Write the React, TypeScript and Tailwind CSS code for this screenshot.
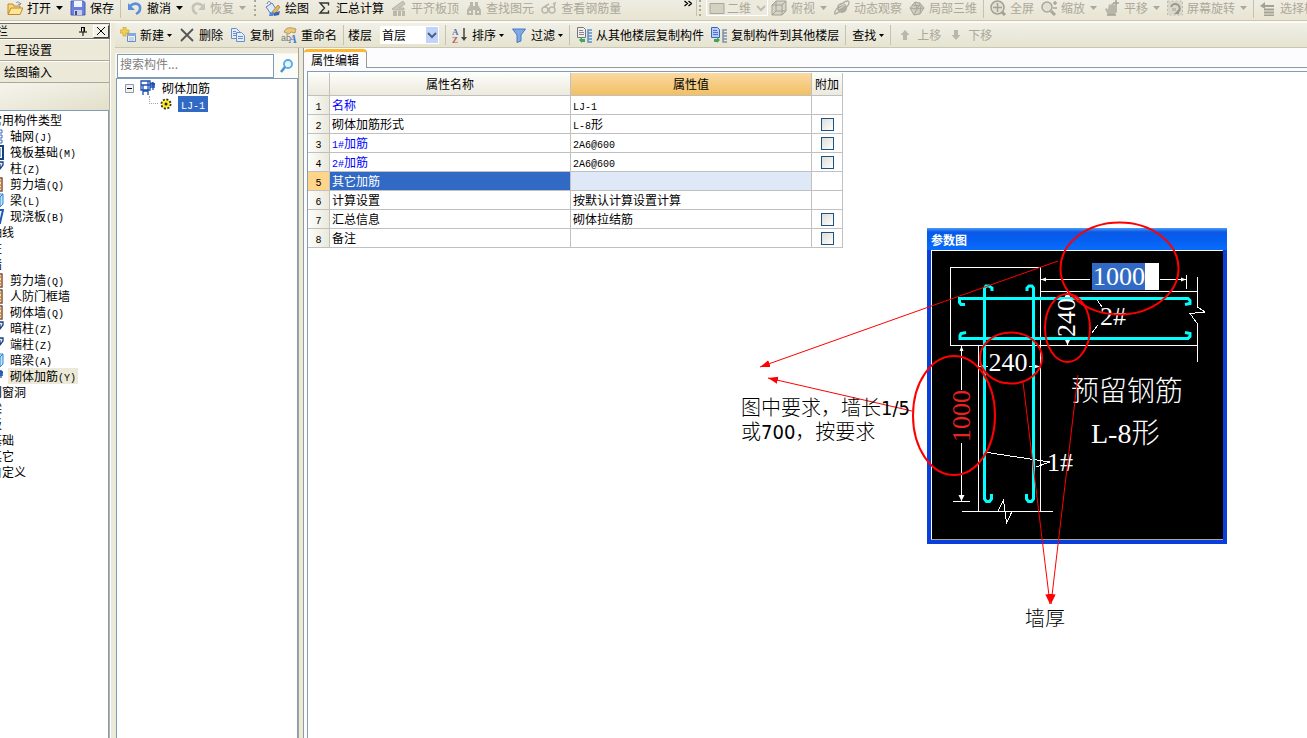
import React from 'react';

const MONO = /([\x21-\x7e]+)/;

// Latin runs are set in a half-width face, six pixels per character
const Mixed: React.FC<{ text: string }> = ({ text }) => (
  <>
    {text.split(MONO).map((part, i) =>
      MONO.test(part) ? (
        <span key={i} className="font-['Liberation_Mono',monospace] text-[10px] leading-none">
          {part}
        </span>
      ) : (
        part
      )
    )}
  </>
);

const icons: Record<string, React.ReactNode> = {
  open: (
    <>
      <path d="M1 14V4h5l1 2h6v3" fill="#f7d774" stroke="#c08a2a" />
      <path d="M1 14.500 4 8h12l-3 6.500z" fill="#fde69a" stroke="#c08a2a" />
      <path d="M9 3c2-2 4-1 4 1m-2 0 2 1 1-2" fill="none" stroke="#6f8fb5" />
    </>
  ),
  save: (
    <>
      <path d="M1 1h12.500L15 2.500V15H1z" fill="#6a80dc" stroke="#4a5cae" />
      <path d="M4 1h8v6H4z" fill="#eef3ff" />
      <path d="M4 10h8v5H4z" fill="#c9cfe0" />
      <path d="M5 11h2v4H5z" fill="#3d4c94" />
    </>
  ),
  undo: (
    <>
      <path d="M3 6c6-5 11-1 10 3 0 2-2 4-4 5" fill="none" stroke="#5b8fdc" strokeWidth="2.500" />
      <path d="M1 3v7h7z" fill="#5b8fdc" />
    </>
  ),
  redo: (
    <>
      <path d="M13 6C7 1 2 5 3 9c0 2 2 4 4 5" fill="none" stroke="#c5c3b8" strokeWidth="2.500" />
      <path d="M15 3v7H8z" fill="#c5c3b8" />
    </>
  ),
  draw: (
    <>
      <path d="M2 4c1-4 4-3 4 1" fill="none" stroke="#5c7fb4" />
      <path d="m1 7 6-4 4 6-5 5z" fill="#dce9fa" stroke="#5c7fb4" />
      <path d="m7 12 6-7 2 2-5 7z" fill="#e4b75b" stroke="#a87a30" strokeWidth=".7" />
      <path d="m5 12 5 1-2 3H4z" fill="#4e86d8" />
      <path d="m9 13 6-2-1 4-5 1z" fill="#3a62b3" />
    </>
  ),
  sigma: <path d="M12.500 5.500V3H4l4.500 5L4 13h8.500v-2.500" fill="none" stroke="#333" strokeWidth="1.400" />,
  slab: (
    <>
      <path d="M1 9 12 1l2 3-6 4h5v2H3z" fill="#c9c7ba" stroke="#b5b3a6" />
      <path d="M2 11h4v5H2zM7 11h3v5H7zM11 11h3v5h-3z" fill="#bbb8aa" />
    </>
  ),
  binoculars: (
    <path d="M4 2h3v4h2V2h3v3l3 5v5H9v-5H7v5H1v-5l3-5zM3 11v2h2v-2zm8 0v2h2v-2z" fill="#b9b7aa" />
  ),
  glasses: (
    <g fill="none" stroke="#b9b7aa" strokeWidth="1.500">
      <circle cx="4" cy="10" r="3" />
      <circle cx="11" cy="10" r="3" />
      <path d="m7 9 1 0M3 7l5-3M13 8l1-5-2 1" />
    </g>
  ),
  flat: <path d="M1 3.500h14v10H1z" fill="#d3d1c2" stroke="#a9a798" />,
  cube: (
    <g stroke="#a3a196">
      <path d="m1 5 4-4h10v10l-4 4H1z" fill="#d6d4c6" />
      <path d="M1 5h10v10M11 5l4-4M5 1v10h10M5 11l-4 4" fill="none" />
    </g>
  ),
  orbit: (
    <>
      <circle cx="8" cy="8" r="5" fill="#aeaca0" />
      <path d="M1 14C-1 11 9 1 14 1c3 1-1 7-5 9s-7 4-8 4z" fill="none" stroke="#aeaca0" strokeWidth="1.300" />
      <path d="m5 6 5-2M5 9l6-4" stroke="#dedccf" />
    </>
  ),
  local: (
    <g stroke="#a9a79b" fill="#cfcdbf">
      <path d="m1 8 5-6 5 1 4 5-4 6-6 1z" />
      <path d="m6 2 2 7-3 6M8 9l7-1M3 5l9 1-1 8M1 8l7 1 3-6" fill="none" />
    </g>
  ),
  full: (
    <g fill="none" stroke="#a3a196">
      <circle cx="7.500" cy="7.500" r="6.500" fill="#e2e0d3" strokeWidth="1.500" />
      <path d="M7.500 3v9M3 7.500h9" strokeWidth="1.500" />
      <path d="m12 12 3 3" strokeWidth="3" />
    </g>
  ),
  zoom: (
    <g fill="none" stroke="#a9a79b">
      <circle cx="6" cy="7" r="5" fill="#e2e0d3" strokeWidth="1.500" />
      <path d="m10 11 4 4" strokeWidth="3" />
      <path d="M12 3h4M14 1v4M12 8h4" strokeWidth="1.500" />
    </g>
  ),
  pan: (
    <>
      <path d="m1 9 2-1 1 2 1-6 2 1 1-2 2 1 1 2h2v6l-3 3H4z" fill="#b8b6aa" />
      <path d="M9 3h6M12 0v6M3 15h9" stroke="#a3a196" strokeWidth="1.500" />
    </>
  ),
  rotate: (
    <>
      <path d="M.500 1h15v14H.500z" fill="#dad8ca" stroke="#bebcaf" strokeDasharray="2 2" />
      <path d="M4 7a4.500 4.500 0 1 1 7 5" fill="none" stroke="#999789" strokeWidth="2" />
      <path d="M12 9v5H7z" fill="#999789" />
      <path d="M5 8h4v3H5z" fill="#bebcaf" />
    </>
  ),
  pick: (
    <>
      <path d="m0 6 5-4v3h9v2H5v2z" fill="#a3a196" />
      <path d="M4 9.500h10M4 12.500h10M4 15.500h10" stroke="#a3a196" strokeWidth="2" />
    </>
  ),
  create: (
    <>
      <path d="M7.500 6.500h8v8h-8z" fill="#eaf2fc" stroke="#6b8cbd" />
      <path d="M7 6h9v3H7z" fill="#86a9d8" />
      <path d="M9 11h5M9 13h5" stroke="#9db6d8" />
      <path d="M3 0h3v3h3v3H6v3H3V6H0V3h3z" fill="#f3cf4e" stroke="#c49a28" strokeWidth=".6" />
    </>
  ),
  remove: <path d="m2 2 12 12M14 2 2 14" stroke="#555" strokeWidth="1.800" />,
  copy: (
    <g fill="#e4eefb" stroke="#6a8fc8">
      <path d="M1.500 1.500h5l3 3v7h-8z" />
      <path d="M6.500 5.500h5l3 3v6h-8z" />
      <path d="M8 9.500h5M8 11.500h5M3 4.500h3M3 6.500h3M3 8.500h3" />
    </g>
  ),
  rename: (
    <>
      <path d="M3 5C5 0 9 0 15 2l-1 4-4-1-2 2z" fill="#eec77d" stroke="#a8813e" strokeWidth=".7" />
      <text x="0" y="14" fontSize="9" fontFamily="Liberation Sans" fill="#777">ab</text>
      <text x="8" y="16" fontSize="12" fontWeight="700" fontStyle="italic" fontFamily="Liberation Serif" fill="#4c78cc">A</text>
    </>
  ),
  sort: (
    <>
      <text x="0" y="7.500" fontSize="9" fontWeight="700" fontFamily="Liberation Serif" fill="#5673b5">A</text>
      <text x="0" y="15.500" fontSize="9" fontWeight="700" fontFamily="Liberation Serif" fill="#b45b6c">Z</text>
      <path d="M12 1v10" stroke="#444" strokeWidth="1.500" />
      <path d="M9 10h6l-3 4z" fill="#444" />
    </>
  ),
  filter: <path d="M1.500 2h13L10 8v6l-4 1.500V8z" fill="#7fa8e6" stroke="#4a78c4" />,
  copyFrom: (
    <>
      <path d="M1.500.500h6l2 2v8h-8z" fill="#eee" stroke="#777" />
      <path d="M3 3.500h4M3 5.500h5M3 7.500h5" stroke="#888" />
      <path d="m3 13 3-3v2h3v3H6v1z" fill="#3fa65a" />
      <path d="M16 3h-4v12h4M12 6h4M12 9h4M12 12h4" fill="none" stroke="#5b8fd0" strokeWidth="1.500" />
    </>
  ),
  copyTo: (
    <>
      <path d="M.500.500h6l2 2v8h-8z" fill="#b7cdf5" stroke="#4163b8" />
      <path d="M2 3.500h4M2 5.500h5M2 7.500h5" stroke="#4f74c6" />
      <path d="m9 13-3-3v2H3v3h3v1z" fill="#3fa65a" />
      <path d="M16 3h-4v12h4M12 6h4M12 9h4M12 12h4" fill="none" stroke="#7d8fa8" strokeWidth="1.500" />
    </>
  ),
  up: <path d="M8 3 3.500 8H6v5h4V8h2.500z" fill="#b9b7ab" />,
  down: <path d="M8 13 3.500 8H6V3h4v5h2.500z" fill="#b9b7ab" />,
  search: (
    <>
      <circle cx="10" cy="6" r="4" fill="#e6f4fd" stroke="#58a9e6" strokeWidth="1.800" />
      <path d="m7 9-4 5" stroke="#4a90d0" strokeWidth="2.500" />
    </>
  ),
  masonry: (
    <g fill="none" stroke="#1c4fb4" strokeWidth="1.300">
      <path d="M1 1h9v9H1zM1 5h14M3 5v10M8 1v14M3 11h5M13 2v8M10 3l5 1M10 7h5" />
    </g>
  ),
  gear: (
    <>
      <circle cx="8" cy="8" r="4.500" fill="#ffee20" stroke="#333" strokeWidth="2" strokeDasharray="2 1.500" />
      <circle cx="8" cy="8" r="3.500" fill="#ffee20" />
      <circle cx="8" cy="8" r="1.500" fill="#222" />
    </>
  ),
  axis: (
    <path d="M1 3h10M1 8h10M1 13h10M4 1v14M9 1v14M11 2h3v3h-3zM11 7h3v3h-3zM11 12h3v3h-3z" fill="none" stroke="#3767b8" />
  ),
  raft: (
    <>
      <path d="M1 2h14v13H1z" fill="#fff" stroke="#15407f" strokeWidth="2" />
      <path d="M5 4v9M9 4v9M12 4v9" stroke="#1d5fae" />
    </>
  ),
  column: <path d="M3 2h12v3l-3 4v-4H8v9H3z" fill="#dce9fb" stroke="#1d3f80" strokeWidth="1.300" />,
  wall: (
    <>
      <path d="M2 2h12v13H2z" fill="#f3e2cd" stroke="#7a573c" strokeWidth="1.500" />
      <path d="M5 5h9M5 9h9M5 12h9" stroke="#d27b30" strokeWidth="1.500" />
    </>
  ),
  beam: <path d="m2 5 4-3h9l-3 3zM2 5h10v10M12 5l3-3v10l-3 3" fill="#bfe2fb" stroke="#2f86cf" />,
  board: <path d="M3 2h12l-3 13H3z" fill="#eef5ff" stroke="#1f56b5" strokeWidth="2" />,
};

const Icon: React.FC<{ name: string }> = ({ name }) => (
  <svg className="size-4 shrink-0" viewBox="0 0 16 16" aria-hidden="true">
    {icons[name]}
  </svg>
);

const Caret: React.FC<{ small?: boolean }> = ({ small }) =>
  small ? (
    <svg className="ml-[3px] h-[3px] w-[5px] shrink-0" viewBox="0 0 5 3">
      <path d="M0 0h5L2.500 3z" fill="currentColor" />
    </svg>
  ) : (
    <svg className="ml-[5px] h-1 w-[7px] shrink-0" viewBox="0 0 7 4">
      <path d="M0 0h7L3.500 4z" fill="currentColor" />
    </svg>
  );

interface ToolProps {
  icon?: string;
  label: string;
  menu?: boolean;
  small?: boolean;
  disabled?: boolean;
}

const Tool: React.FC<ToolProps> = ({ icon, label, menu, small, disabled }) => (
  <button
    type="button"
    disabled={disabled}
    className="flex h-4 shrink-0 items-center whitespace-nowrap text-black disabled:text-[#aca899]"
  >
    {icon && (
      <span className="mr-1">
        <Icon name={icon} />
      </span>
    )}
    {label}
    {menu && <Caret small={small} />}
  </button>
);

const Divider = () => <div className="-mx-px h-5 w-px shrink-0 bg-[#c5c2ae]" />;

const Grip = () => (
  <div className="mx-px flex h-4 w-[3px] shrink-0 flex-col justify-between">
    {[0, 1, 2, 3].map((n) => (
      <span key={n} className="h-[2px] w-[2px] bg-[#aaa796]" />
    ))}
  </div>
);

const MainToolbar = () => (
  <div className="flex h-[23px] shrink-0 border-b-2 border-[#fbfaf4] bg-linear-to-b from-[#efede3] to-[#e7e4d1] shadow-[inset_0_-1px_0_#c9c6b2]">
    <div className="flex h-4 w-[697px] shrink-0 items-center gap-[7px] border-r border-[#c5c2ae] pl-[7px]">
      <Tool icon="open" label="打开" menu />
      <Tool icon="save" label="保存" />
      <Divider />
      <Tool icon="undo" label="撤消" menu />
      <Tool icon="redo" label="恢复" menu disabled />
      <Grip />
      <Tool icon="draw" label="绘图" />
      <Tool icon="sigma" label="汇总计算" />
      <Tool icon="slab" label="平齐板顶" disabled />
      <Tool icon="binoculars" label="查找图元" disabled />
      <Tool icon="glasses" label="查看钢筋量" disabled />
      <button type="button" className="mr-1 mb-2 ml-auto" aria-label="更多">
        <svg className="h-2 w-2" viewBox="0 0 8 8" fill="none" stroke="#000" strokeWidth="1.300">
          <path d="m.500 1 3 2.500-3 2.500M4.500 1l3 2.500-3 2.500" />
        </svg>
      </button>
    </div>
    <div className="flex h-4 items-center gap-[7px] pl-px">
      <Grip />
      <label className="-mx-1 flex h-4 w-[62px] shrink-0 items-center border border-t-0 border-white bg-[#eceadc] pl-0.5">
        <Icon name="flat" />
        <select disabled aria-label="视图模式" className="w-7 appearance-none pl-0.5 text-[#aca899]">
          <option>二维</option>
        </select>
        <svg className="ml-0.5 h-4 w-3" viewBox="0 0 12 16" fill="none" stroke="#bfbdb0" strokeWidth="2">
          <path d="m2 6 4 4 4-4" />
        </svg>
      </label>
      <Tool icon="cube" label="俯视" menu disabled />
      <Tool icon="orbit" label="动态观察" disabled />
      <Tool icon="local" label="局部三维" disabled />
      <Divider />
      <Tool icon="full" label="全屏" disabled />
      <Tool icon="zoom" label="缩放" menu disabled />
      <Tool icon="pan" label="平移" menu disabled />
      <Tool icon="rotate" label="屏幕旋转" menu disabled />
      <Divider />
      <Tool icon="pick" label="选择构件" disabled />
    </div>
  </div>
);

const ComponentToolbar = () => (
  <div className="flex h-[25px] shrink-0 items-center gap-[7px] border-b border-[#c9c6b2] bg-linear-to-b from-[#f1f0e7] to-[#e6e3d0] pl-[5px]">
    <Tool icon="create" label="新建" menu small />
    <Tool icon="remove" label="删除" />
    <Tool icon="copy" label="复制" />
    <Tool icon="rename" label="重命名" />
    <Divider />
    <div className="-ml-0.5 flex shrink-0 items-center gap-2">
      <label htmlFor="floor">楼层</label>
      <div className="flex h-[18px] w-[59px] items-center bg-white pr-px">
        <select id="floor" className="w-12 appearance-none pl-0.5 outline-none">
          <option>首层</option>
        </select>
        <svg className="h-4 w-3 shrink-0 bg-[#c1d3fb]" viewBox="0 0 12 16" fill="none" stroke="#4d6185" strokeWidth="2">
          <path d="m2 6 4 4 4-4" />
        </svg>
      </div>
    </div>
    <Divider />
    <Tool icon="sort" label="排序" menu small />
    <Tool icon="filter" label="过滤" menu small />
    <Divider />
    <Tool icon="copyFrom" label="从其他楼层复制构件" />
    <Tool icon="copyTo" label="复制构件到其他楼层" />
    <Divider />
    <Tool label="查找" menu small />
    <Divider />
    <Tool icon="up" label="上移" disabled />
    <Tool icon="down" label="下移" disabled />
  </div>
);

const navItems: { label: string; icon?: string; selected?: boolean }[] = [
  { label: '常用构件类型' },
  { label: '轴网(J)', icon: 'axis' },
  { label: '筏板基础(M)', icon: 'raft' },
  { label: '柱(Z)', icon: 'column' },
  { label: '剪力墙(Q)', icon: 'wall' },
  { label: '梁(L)', icon: 'beam' },
  { label: '现浇板(B)', icon: 'board' },
  { label: '轴线' },
  { label: '柱' },
  { label: '墙' },
  { label: '剪力墙(Q)', icon: 'wall' },
  { label: '人防门框墙', icon: 'wall' },
  { label: '砌体墙(Q)', icon: 'wall' },
  { label: '暗柱(Z)', icon: 'column' },
  { label: '端柱(Z)', icon: 'column' },
  { label: '暗梁(A)', icon: 'beam' },
  { label: '砌体加筋(Y)', icon: 'masonry', selected: true },
  { label: '门窗洞' },
  { label: '梁' },
  { label: '板' },
  { label: '基础' },
  { label: '其它' },
  { label: '自定义' },
];

const Sidebar = () => (
  <aside className="flex w-[111px] shrink-0 flex-col border-r border-white">
    <div className="flex h-4 shrink-0 items-center justify-end overflow-hidden border border-l-0 border-[#716f64]">
      <span className="mr-auto -ml-1">栏</span>
      <button type="button" aria-label="固定" className="mr-[6px]">
        <svg className="h-[10px] w-2" viewBox="0 0 8 10" fill="none" stroke="#000">
          <path d="M2 1.500h4M2.500 1v4.500M5.500 1v4.500M5 1v5M0 6h8M4 6v4" />
        </svg>
      </button>
      <button
        type="button"
        aria-label="关闭"
        className="flex h-[13px] w-4 items-center justify-center border border-white border-r-[#444] border-b-[#444] bg-[#f3f1e6]"
      >
        <svg className="size-2" viewBox="0 0 8 8" stroke="#000">
          <path d="m0 0 8 8M8 0 0 8" />
        </svg>
      </button>
    </div>
    <div className="flex min-h-0 flex-1 flex-col border-r border-[#b5b29f]">
      {['工程设置', '绘图输入'].map((label) => (
        <button
          key={label}
          type="button"
          className="h-[22px] shrink-0 border-t border-b border-t-white border-b-[#aca899] bg-[#ece9d8] pl-1 text-left"
        >
          {label}
        </button>
      ))}
      <div className="h-[27px] shrink-0 bg-linear-to-br from-[#f6f5ee] to-[#e2dfc9]" />
      <ul className="flex-1 overflow-hidden border-t border-r border-[#7f9db9] bg-white pt-px">
        {navItems.map((item, i) => (
          <li key={i} className={`flex h-4 items-center whitespace-nowrap ${item.icon ? '-ml-3' : '-ml-[10px]'}`}>
            {item.icon && <Icon name={item.icon} />}
            <span className={item.icon ? `ml-1 h-4 px-0.5 leading-4 ${item.selected ? 'bg-[#ece9d8]' : ''}` : 'leading-4'}>
              <Mixed text={item.label} />
            </span>
          </li>
        ))}
      </ul>
    </div>
  </aside>
);

const ComponentTree = () => (
  <section className="flex w-[184px] shrink-0 flex-col border-r border-[#a5a391] pt-[5px]">
    <div className="flex h-[25px] shrink-0 items-center bg-[#f7f6f0] pl-0.5">
      <input
        type="text"
        aria-label="搜索构件"
        placeholder="搜索构件..."
        className="h-6 w-[157px] border border-[#7f9db9] bg-white px-0.5 pb-1 outline-none placeholder:text-[#808080]"
      />
      <button type="button" aria-label="搜索" className="flex h-6 flex-1 items-center justify-center bg-[#fbfbf8]">
        <Icon name="search" />
      </button>
    </div>
    <div className="ml-px flex-1 border border-b-0 border-[#7f9db9] bg-white pt-px pl-2">
      <div className="flex h-4 items-center">
        <svg className="size-[9px]" viewBox="0 0 9 9" fill="none">
          <path d="M.500.500h8v8h-8z" fill="#f4f2ea" stroke="#7f9db9" />
          <path d="M2 4.500h5" stroke="#000" />
        </svg>
        <span className="mx-[6px]">
          <Icon name="masonry" />
        </span>
        砌体加筋
      </div>
      <div className="flex h-4 items-center pl-6">
        <span className="-mt-2 h-2 w-[9px] border-b border-l border-dotted border-[#aca899]" />
        <Icon name="gear" />
        <span className="ml-1 h-4 bg-[#316ac5] px-[3px] leading-4 text-white">
          <Mixed text="LJ-1" />
        </span>
      </div>
    </div>
  </section>
);

const properties = [
  { name: '名称', value: 'LJ-1', linked: true },
  { name: '砌体加筋形式', value: 'L-8形', extra: true },
  { name: '1#加筋', value: '2A6@600', linked: true, extra: true },
  { name: '2#加筋', value: '2A6@600', linked: true, extra: true },
  { name: '其它加筋', value: '', active: true },
  { name: '计算设置', value: '按默认计算设置计算' },
  { name: '汇总信息', value: '砌体拉结筋', extra: true },
  { name: '备注', value: '', extra: true },
];

const PropertyTable = () => (
  <table className="w-[535px] table-fixed border-separate border-spacing-0 [&_td]:border-r [&_td]:border-b [&_td]:border-[#c0c0c0] [&_td]:py-0 [&_th]:border-r [&_th]:border-b [&_th]:border-[#c0c0c0] [&_th]:p-0 [&_th]:font-normal">
    <colgroup>
      <col className="w-[22px]" />
      <col className="w-[241px]" />
      <col className="w-[241px]" />
      <col className="w-[31px]" />
    </colgroup>
    <thead>
      <tr className="h-[23px] bg-linear-to-b from-[#fdfdfa] to-[#ebe9dc]">
        <th />
        <th>属性名称</th>
        <th className="bg-linear-to-b from-[#fad9a0] to-[#f2c063]">属性值</th>
        <th>附加</th>
      </tr>
    </thead>
    <tbody>
      {properties.map((row, i) => (
        <tr key={row.name} className="h-[19px] leading-4">
          <th scope="row" className={row.active ? 'bg-[#ffd58a]' : 'bg-linear-to-r from-[#fdfdfa] to-[#ebe9dc]'}>
            <Mixed text={String(i + 1)} />
          </th>
          <td className={`pl-0.5 ${row.active ? 'bg-[#316ac5] text-white' : row.linked ? 'text-[#0000ff]' : ''}`}>
            <Mixed text={row.name} />
          </td>
          <td className={`pl-0.5 ${row.active ? 'bg-[#dfe8f6]' : ''}`}>
            <Mixed text={row.value} />
          </td>
          <td>
            {row.extra && (
              <input
                type="checkbox"
                aria-label={`附加 ${row.name}`}
                className="mx-auto block size-[13px] appearance-none border border-[#1c5180] bg-linear-to-br from-[#dcdcd7] to-white"
              />
            )}
          </td>
        </tr>
      ))}
    </tbody>
  </table>
);

const RebarDrawing = () => (
  <svg className="block h-[288px] w-[291px] bg-black" viewBox="932 251 291 288">
    <g fill="none" stroke="#fff" shapeRendering="crispEdges">
      <path d="M950.500 345.500V267.500H1040.500V511M950 345.500H1197M978.500 345V511M1040 291.500H1197" />
      <path d="M1197.500 277V307L1205 312 1190 313.500 1197.500 324V362" />
      <path d="M962 511.500H1053M998 511.500 1003.500 500 1006.500 523 1012 511.500" />
      <path d="M1041 279.500H1090M1160 279.500H1186M1186.500 275V289" />
      <path d="M961.500 346V390M961.500 443V501M953 501.500H970" />
      <path d="M979 366.500H988M1029 366.500H1040M1067.500 291V345" />
      <path d="M1095 297 1102 307M1092 333 1098 325M984 452 1050 462 1036 467" />
    </g>
    <path
      d="M1041 279.500l5-2v4zM1186 279.500l-5-2v4zM961.500 346l-2 5h4zM961.500 501l-3-6h6zM979 366.500l5-2v4zM1040 366.500l-6-2v4zM1067.500 292l-3 5h6zM1067.500 345l-3-6h6z"
      fill="#fff"
    />
    <g fill="none" stroke="#00ffff" strokeWidth="3">
      <path d="M965 304.500h-4l-1.500-2v-4H1188l2 2v3l-5 1" />
      <path d="M966 332.500l-5 1-1 2v3H1188l2-2v-3l-5-1" />
      <path d="M992 291v-3l-3-2h-3l-1.500 2V499l2 2.500h3l2-2.500v-5" />
      <path d="M1027 291v-3l2-2h3l1.500 2V499l-2 2.500h-3l-2-2.500v-5" />
    </g>
    <path d="M1056 300h20v37h-20z" fill="#000" />
    <g fill="#fff" fontFamily="'Liberation Serif', serif" fontSize="26">
      <text x="1008" y="371" textAnchor="middle">240</text>
      <text x="1100" y="325">2#</text>
      <text x="1047" y="471">1#</text>
      <text transform="translate(1075 337) rotate(-90)">240</text>
      <text transform="translate(970 442) rotate(-90)" fill="#f02020">1000</text>
    </g>
    <g fill="#fff" fontFamily="'Liberation Serif', 'Noto Sans CJK SC', serif" fontSize="28" fontWeight="300">
      <text x="1071" y="401">预留钢筋</text>
      <text x="1091" y="443">L-8形</text>
    </g>
  </svg>
);

const ParameterWindow = () => (
  <div className="absolute top-[156px] left-[619px] w-[300px] border-4 border-t-0 border-[#0a3fdc] shadow-[inset_0_0_0_1px_#0831d9]">
    <h2 className="-mx-1 h-[22px] bg-[linear-gradient(to_bottom,#4a9cf8_0,#0a58e6_4px,#0560f2_12px,#0a6cfb_100%)] pt-[3px] pl-1 leading-[18px] font-bold text-white">
      参数图
    </h2>
    <div className="relative border border-t-white border-r-[#aca899] border-b-[#aca899] border-l-white">
      <RebarDrawing />
      <input
        type="text"
        aria-label="1000"
        defaultValue="1000"
        className="absolute top-3 left-[160px] h-[27px] w-[67px] bg-[linear-gradient(to_right,#316ac5_53px,#fff_53px)] pl-px font-['Liberation_Serif',serif] text-[26px] leading-[27px] text-white outline-none"
      />
    </div>
  </div>
);

const arrows = [
  [1058, 261, 760, 367],
  [912, 411, 768, 378],
  [1023, 382, 1050, 604],
  [1078, 375, 1051, 604],
];

const Annotations = () => (
  <>
    <svg className="pointer-events-none absolute top-[143px] left-[422px] h-[430px] w-[500px]" viewBox="730 215 500 430">
      <defs>
        <marker id="head" viewBox="0 0 10 8" refX="10" refY="4" markerWidth="10" markerHeight="8" orient="auto">
          <path d="M0 0.500 10 4 0 7.500z" fill="#f00" />
        </marker>
      </defs>
      <g fill="none" stroke="#f00" strokeWidth="2">
        <ellipse cx="1119.500" cy="268.500" rx="59" ry="46" />
        <ellipse cx="1067.500" cy="328" rx="22.500" ry="34" />
        <ellipse cx="1011" cy="358" rx="31" ry="25.500" />
        <ellipse cx="954" cy="415.500" rx="41" ry="59.500" />
      </g>
      {arrows.map(([x1, y1, x2, y2]) => (
        <line key={`${x1}-${y1}`} x1={x1} y1={y1} x2={x2} y2={y2} stroke="#f00" markerEnd="url(#head)" />
      ))}
    </svg>
    <p className="absolute top-[324px] left-[433px] font-['DejaVu_Sans_Condensed','Noto_Sans_CJK_SC',sans-serif] text-[20px] leading-6 font-light whitespace-nowrap">
      图中要求，墙长<span className="font-normal">1/5</span>
      <br />或<span className="font-normal">700</span>，按要求
    </p>
    <p className="absolute top-[534px] left-[717px] text-[20px] leading-6 font-light whitespace-nowrap">墙厚</p>
  </>
);

const PropertyEditor = () => (
  <section className="ml-1 flex min-w-0 flex-1 flex-col border-l border-[#919b9c] bg-[#fcfcfe] pt-px">
    <div className="flex h-[19px] shrink-0">
      <button type="button" className="h-[19px] w-[63px] shrink-0 rounded-t-sm border-t-[3px] border-r border-t-[#ffb52c] border-r-[#919b9c] pb-1 leading-[15px]">
        属性编辑
      </button>
      <div className="flex-1 border-b border-[#919b9c]" />
    </div>
    <div className="relative mt-[3px] ml-[3px] flex-1 border-t border-l border-[#7f9db9] bg-white pt-px">
      <PropertyTable />
      <ParameterWindow />
      <Annotations />
    </div>
  </section>
);

export default function App() {
  return (
    <div className="flex h-screen flex-col overflow-hidden bg-[#ece9d8] font-['Noto_Sans_CJK_SC',sans-serif] text-xs leading-4 text-black">
      <MainToolbar />
      <div className="flex min-h-0 flex-1">
        <Sidebar />
        <main className="ml-1 flex min-w-0 flex-1 flex-col">
          <ComponentToolbar />
          <div className="flex min-h-0 flex-1">
            <ComponentTree />
            <PropertyEditor />
          </div>
        </main>
      </div>
    </div>
  );
}
